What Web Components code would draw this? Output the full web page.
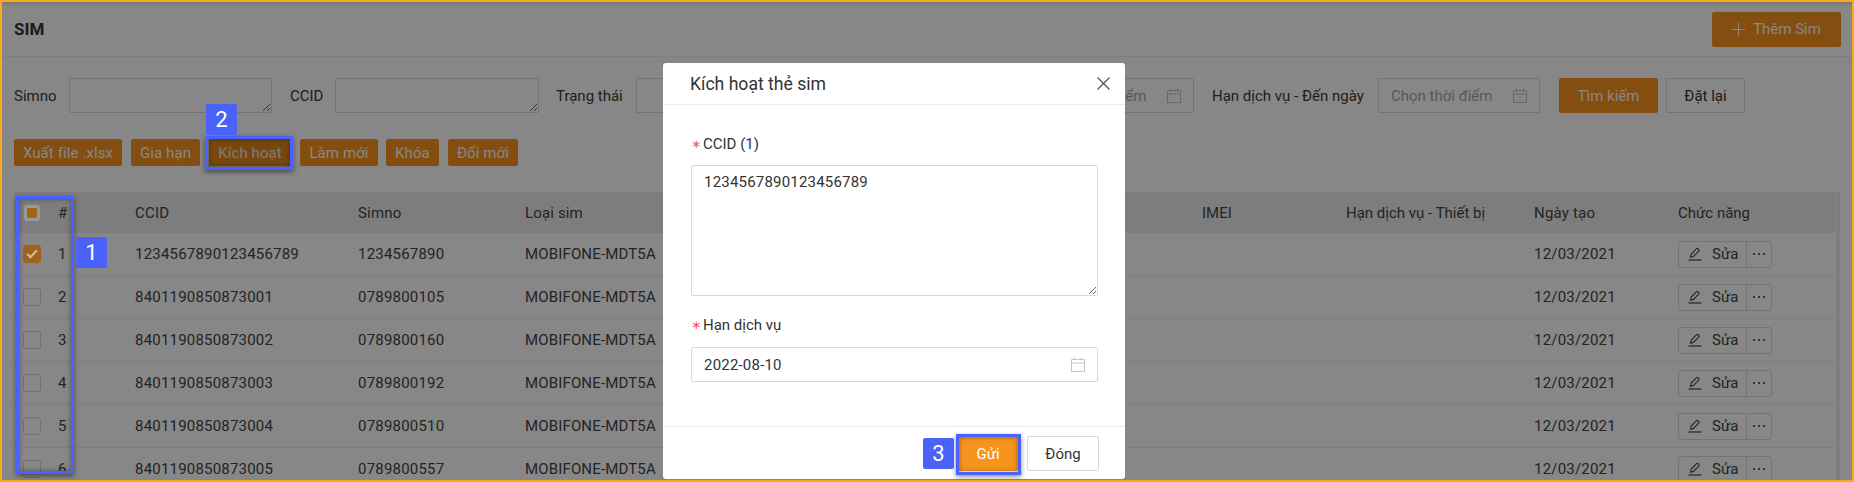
<!DOCTYPE html>
<html lang="vi">
<head>
<meta charset="utf-8">
<title>SIM</title>
<style>
  html, body { margin: 0; height: 100%; overflow: hidden; background: #fff; }
  body { font-family: Roboto, "Liberation Sans", sans-serif; font-size: 15px; color: #3a3a3a; }
</style>
</head>
<body>
<sim-frame>
  <sim-page></sim-page>
  <sim-annotations></sim-annotations>
</sim-frame>

<script>
const ICONS = {
  calendar: `<svg width="14" height="15" viewBox="0 0 14 15" fill="none" stroke="currentColor" stroke-width="1"><path d="M.5 2.5h13v12H.5zM.5 6h13M3.5.5v3M10.5.5v3"/></svg>`,
  pencil: `<svg width="14" height="14" viewBox="0 0 14 14" fill="none" stroke="currentColor" stroke-width="1.1"><path d="M2.5 10.2 3.2 7 8.6 1.6a.9.9 0 0 1 1.3 0l1 1a.9.9 0 0 1 0 1.3L5.5 9.4z"/><path d="M.5 13h13" stroke-width="1.2"/></svg>`,
  check: `<svg width="12" height="10" viewBox="0 0 12 10" fill="none" stroke="currentColor" stroke-width="2"><path d="M1.2 5 4.5 8.2 10.8 1.4"/></svg>`,
  close: `<svg width="13" height="13" viewBox="0 0 13 13" fill="none" stroke="currentColor" stroke-width="1.3"><path d="M.5.5l12 12M12.5.5l-12 12"/></svg>`,
  plus: `<svg width="13" height="13" viewBox="0 0 13 13" fill="none" stroke="currentColor" stroke-width="1.2"><path d="M6.5 0v13M0 6.5h13"/></svg>`,
  dots: `<svg width="14" height="4" viewBox="0 0 14 4" fill="currentColor"><circle cx="2" cy="2" r="1.1"/><circle cx="7" cy="2" r="1.1"/><circle cx="12" cy="2" r="1.1"/></svg>`
};

class SimFrame extends HTMLElement {
  constructor() {
    super();
    this.attachShadow({ mode: "open" });
    this.shadowRoot.innerHTML = `
      <style>
        :host {
          display: block;
          box-sizing: border-box;
          width: 1854px;
          height: 482px;
          border: 2px solid #f9a91c;
          position: relative;
          overflow: hidden;
        }
        .overlay {
          position: absolute;
          inset: 0;
          z-index: 1;
          background: rgba(0, 0, 0, .47);
          box-shadow: inset 0 3px 3px -1px rgba(0, 0, 0, .12);
        }
      </style>
      <slot></slot>
      <div class="overlay"></div>`;
  }
}

class SimButton extends HTMLElement {
  constructor() {
    super();
    this.attachShadow({ mode: "open" });
    this.shadowRoot.innerHTML = `
      <style>
        :host {
          display: inline-flex;
          align-items: center;
          justify-content: center;
          box-sizing: border-box;
          height: 35px;
          padding: 0 17px;
          border: 1px solid #d9d9d9;
          border-radius: 2px;
          background: #fff;
          color: #333;
          font-size: 15px;
          white-space: nowrap;
        }
        :host([primary]) { background: #f7941d; border-color: #f7941d; color: #fff; }
        :host([small]) { height: 27px; padding: 0 6px; border-radius: 2px; letter-spacing: .1px; }
      </style>
      <slot></slot>`;
  }
}

class SimField extends HTMLElement {
  constructor() {
    super();
    this.attachShadow({ mode: "open" });
    const multi = this.hasAttribute("multi");
    const text = this.getAttribute("text") || "";
    const placeholder = this.getAttribute("placeholder") || "";
    const body = multi
      ? `<textarea readonly>${text}</textarea>`
      : `<span class="value ${text ? "" : "ph"}">${text || placeholder}</span>
         ${this.hasAttribute("date") ? `<span class="ico">${ICONS.calendar}</span>` : ""}`;
    this.shadowRoot.innerHTML = `
      <style>
        :host {
          display: flex;
          align-items: center;
          box-sizing: border-box;
          height: 35px;
          font-size: 15px;
          letter-spacing: .2px;
          color: #333;
        }
        :host(:not([multi])) {
          border: 1px solid #d9d9d9;
          border-radius: 2px;
          background: #fff;
          padding: 0 12px 0 12px;
          justify-content: space-between;
        }
        .ph { color: #a8a8a8; letter-spacing: 0; white-space: nowrap; }
        .ico { display: flex; color: #c4c4c4; }
        textarea {
          display: block;
          box-sizing: border-box;
          width: 100%;
          height: 100%;
          margin: 0;
          padding: 5px 12px;
          border: 1px solid #d9d9d9;
          border-radius: 2px;
          outline: none;
          background: #fff;
          color: inherit;
          font: inherit;
          letter-spacing: inherit;
          line-height: 22px;
        }
      </style>
      ${body}`;
  }
}

class SimRow extends HTMLElement {
  constructor() {
    super();
    this.attachShadow({ mode: "open" });
    const cells = (this.getAttribute("cells") || "").split("|");
    const head = this.hasAttribute("head");
    const checked = this.hasAttribute("checked");
    const box = head
      ? `<span class="cb head"><i></i></span>`
      : `<span class="cb ${checked ? "on" : ""}">${checked ? ICONS.check : ""}</span>`;
    const action = head ? cells[7] : `
      <span class="act">
        <span class="edit">${ICONS.pencil}<b>Sửa</b></span>
        <span class="more">${ICONS.dots}</span>
      </span>`;
    this.shadowRoot.innerHTML = `
      <style>
        :host {
          display: grid;
          grid-template-columns: 44px 77px 223px 167px 677px 144px 188px 144px 1fr;
          align-items: center;
          box-sizing: border-box;
          height: 43px;
          border-bottom: 1px solid #efefef;
          font-size: 15px;
          color: #444;
        }
        :host([head]) { height: 41px; background: #ececec; border-bottom: 0; }
        span { white-space: nowrap; }
        .num { letter-spacing: .2px; }
        .sim { letter-spacing: .15px; }
        .cbc { padding-left: 9px; }
        .cb {
          position: relative;
          z-index: 2;
          display: flex;
          align-items: center;
          justify-content: center;
          box-sizing: border-box;
          width: 18px;
          height: 18px;
          border: 1px solid #717171;
          border-radius: 3px;
        }
        .cb.on { background: #a0631a; border-color: #a0631a; color: #c9c1b4; }
        .cb.head { width: 16px; height: 16px; margin-left: 1px; background: #9a9998; border-color: #989898; }
        .cb.head i { display: block; width: 10px; height: 10px; background: #a3641a; }
        .act { display: inline-flex; height: 27px; border: 1px solid #d9d9d9; border-radius: 3px; box-sizing: border-box; }
        .edit { display: flex; align-items: center; gap: 10px; padding: 0 8px 0 9px; border-right: 1px solid #d9d9d9; }
        .edit b { font-weight: 400; }
        .more { display: flex; align-items: center; justify-content: center; width: 24px; }
      </style>
      <span class="cbc">${box}</span>
      <span class="num">${cells[0]}</span>
      <span class="num">${cells[1]}</span>
      <span class="num">${cells[2]}</span>
      <span class="sim">${cells[3]}</span>
      <span>${cells[4]}</span>
      <span>${cells[5]}</span>
      <span class="num">${cells[6]}</span>
      <span>${action}</span>`;
  }
}

class SimTable extends HTMLElement {
  constructor() {
    super();
    this.attachShadow({ mode: "open" });
    const rows = [
      ["1234567890123456789", "1234567890"],
      ["8401190850873001", "0789800105"],
      ["8401190850873002", "0789800160"],
      ["8401190850873003", "0789800192"],
      ["8401190850873004", "0789800510"],
      ["8401190850873005", "0789800557"]
    ];
    const markup = rows.map((r, i) =>
      `<sim-row ${i === 0 ? "checked" : ""} cells="${i + 1}|${r[0]}|${r[1]}|MOBIFONE-MDT5A|||12/03/2021|"></sim-row>`
    ).join("");
    this.shadowRoot.innerHTML = `
      <style>
        :host { display: flex; gap: 1px; }
        .rows { width: 1821px; }
        .bar { width: 4px; background: #ececec; }
      </style>
      <div class="rows">
        <sim-row head cells="#|CCID|Simno|Loại sim|IMEI|Hạn dịch vụ - Thiết bị|Ngày tạo|Chức năng"></sim-row>
        ${markup}
      </div>
      <div class="bar"></div>`;
  }
}

class SimPage extends HTMLElement {
  constructor() {
    super();
    this.attachShadow({ mode: "open" });
    this.shadowRoot.innerHTML = `
      <style>
        :host { display: block; }
        header {
          display: flex;
          justify-content: space-between;
          align-items: center;
          box-sizing: border-box;
          height: 55px;
          padding: 0 11px 0 12px;
          border-bottom: 1px solid #f0f0f0;
        }
        h1 { margin: 0; font-size: 17px; font-weight: 700; color: #333; }
        .add { gap: 8px; width: 129px; padding: 0; height: 35px; }
        .filters { display: flex; align-items: center; height: 35px; padding: 21px 12px 0; }
        .filters label { white-space: nowrap; font-size: 15px; }
        .actions { display: flex; gap: 9px; padding: 26px 12px 0; }
        .grid { padding: 26px 12px 0; }
      </style>
      <header>
        <h1>SIM</h1>
        <sim-button primary class="add">${ICONS.plus}<span>Thêm Sim</span></sim-button>
      </header>
      <div class="filters">
        <label style="width:55px">Simno</label>
        <sim-field multi style="width:203px"></sim-field>
        <label style="margin-left:18px;width:45px">CCID</label>
        <sim-field multi style="width:204px"></sim-field>
        <label style="margin-left:17px;width:80px">Trạng thái</label>
        <sim-field style="width:164px"></sim-field>
        <label style="margin-left:18px;width:214px">Hạn dịch vụ - Từ ngày</label>
        <sim-field date placeholder="Chọn thời điểm" style="width:162px"></sim-field>
        <label style="margin-left:18px;width:166px">Hạn dịch vụ - Đến ngày</label>
        <sim-field date placeholder="Chọn thời điểm" style="width:162px"></sim-field>
        <sim-button primary style="margin-left:19px;width:99px;padding:0">Tìm kiếm</sim-button>
        <sim-button style="margin-left:8px;width:79px;padding:0">Đặt lại</sim-button>
      </div>
      <div class="actions">
        <sim-button primary small style="width:108px">Xuất file .xlsx</sim-button>
        <sim-button primary small style="width:69px">Gia hạn</sim-button>
        <sim-button primary small style="width:82px">Kích hoạt</sim-button>
        <sim-button primary small style="width:78px">Làm mới</sim-button>
        <sim-button primary small style="width:53px;margin-left:-1px">Khóa</sim-button>
        <sim-button primary small style="width:70px">Đổi mới</sim-button>
      </div>
      <div class="grid"><sim-table></sim-table></div>`;
  }
}

class SimModal extends HTMLElement {
  constructor() {
    super();
    this.attachShadow({ mode: "open" });
    this.shadowRoot.innerHTML = `
      <style>
        :host {
          position: absolute;
          left: 661px;
          top: 61px;
          width: 462px;
          background: #fff;
          border-radius: 3px;
          color: #333;
          font-size: 15px;
        }
        .head {
          display: flex;
          justify-content: space-between;
          align-items: center;
          box-sizing: border-box;
          height: 42px;
          padding: 0 15px 0 27px;
          border-bottom: 1px solid #ececec;
        }
        h2 { margin: 0; font-size: 17.6px; font-weight: 400; color: #333; }
        .x { display: flex; color: #555; }
        .body { padding: 28px 27px 44px 28px; }
        .lab { display: flex; align-items: center; height: 22px; margin-bottom: 10px; }
        .lab i { flex: none; width: 12px; color: #ff4d4f; font: normal 12px "DejaVu Sans", sans-serif; }
        .lab.two { margin-top: 18px; margin-bottom: 11px; }
        .foot {
          display: flex;
          justify-content: flex-end;
          gap: 9px;
          padding: 9px 26px 8px 0;
          border-top: 1px solid #ececec;
        }
      </style>
      <div class="head"><h2>Kích hoạt thẻ sim</h2><span class="x">${ICONS.close}</span></div>
      <div class="body">
        <div class="lab"><i>∗</i>CCID (1)</div>
        <sim-field multi text="1234567890123456789" style="height:131px"></sim-field>
        <div class="lab two"><i>∗</i>Hạn dịch vụ</div>
        <sim-field date text="2022-08-10"></sim-field>
      </div>
      <div class="foot">
        <sim-button primary style="width:60px;padding:0">Gửi</sim-button>
        <sim-button style="width:72px;padding:0">Đóng</sim-button>
      </div>`;
  }
}

// khung xanh va so thu tu nam tren overlay
class SimMark extends HTMLElement {
  constructor() {
    super();
    this.attachShadow({ mode: "open" });
    this.shadowRoot.innerHTML = `
      <style>
        :host {
          position: absolute;
          box-sizing: border-box;
          border: 3px solid #4a62ff;
          box-shadow: 0 2px 5px rgba(0, 0, 0, .45), inset 0 0 5px rgba(0, 0, 0, .4);
        }
        :host([tag]) {
          display: flex;
          align-items: center;
          justify-content: center;
          border: 0;
          border-radius: 2px;
          background: #4a62f8;
          box-shadow: none;
          color: #fff;
          font-size: 22px;
        }
      </style>
      <slot></slot>`;
  }
}

class SimAnnotations extends HTMLElement {
  constructor() {
    super();
    this.attachShadow({ mode: "open" });
    const box = (l, t, w, h) => `left:${l - 2}px;top:${t - 2}px;width:${w}px;height:${h}px`;
    this.shadowRoot.innerHTML = `
      <style>
        :host { position: absolute; inset: 0; z-index: 4; }
      </style>
      <sim-modal></sim-modal>
      <sim-mark style="${box(16, 196, 58, 278)}"></sim-mark>
      <sim-mark tag style="${box(76, 237, 31, 31)}">1</sim-mark>
      <sim-mark style="${box(205, 136, 88, 34)};background:rgba(0,0,0,.08)"></sim-mark>
      <sim-mark tag style="${box(206, 104, 31, 31)}">2</sim-mark>
      <sim-mark style="${box(956, 434, 65, 41)}"></sim-mark>
      <sim-mark tag style="${box(923, 438, 31, 31)}">3</sim-mark>`;
  }
}

customElements.define("sim-frame", SimFrame);
customElements.define("sim-button", SimButton);
customElements.define("sim-field", SimField);
customElements.define("sim-row", SimRow);
customElements.define("sim-table", SimTable);
customElements.define("sim-page", SimPage);
customElements.define("sim-modal", SimModal);
customElements.define("sim-mark", SimMark);
customElements.define("sim-annotations", SimAnnotations);
</script>
</body>
</html>
